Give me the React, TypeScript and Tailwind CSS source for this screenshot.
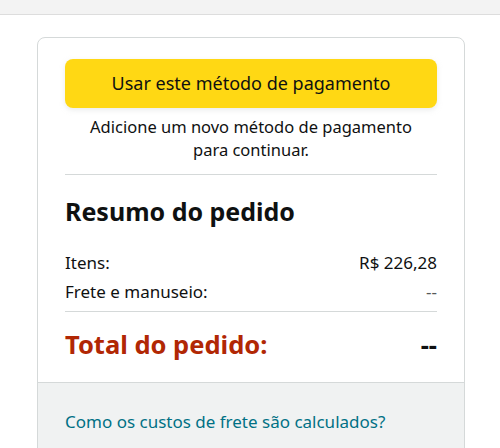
export default function App() {
  return (
    <div className="min-h-[448px] bg-white font-['Noto_Sans',sans-serif] text-[#0f1111]">
      {/* barra superior */}
      <div className="h-[15px] bg-[#f3f3f3] border-b border-[#dddddd]" />

      <div className="pl-[37px] pt-[22px]">
        <div className="w-[428px] rounded-t-lg border border-[#d5d9d9] overflow-hidden">
          <div className="px-[27px] pt-[21px]">
            <button className="w-full h-[49px] rounded-lg bg-[#ffd814] shadow-[0_2px_5px_rgba(213,217,217,0.5)] text-[18px] text-[#0f1111]">
              Usar este método de pagamento
            </button>
            <p className="mt-[7px] text-center text-[16.5px] leading-[23px] px-3">
              Adicione um novo método de pagamento para continuar.
            </p>

            <div className="mt-[13px] border-t border-[#d5d9d9]" />

            <h2 className="mt-[20px] text-[25px] font-bold leading-[32px]">Resumo do pedido</h2>

            <div className="mt-[21px] text-[17px] leading-[29px]">
              <div className="flex justify-between">
                <span>Itens:</span>
                <span>R$ 226,28</span>
              </div>
              <div className="flex justify-between">
                <span>Frete e manuseio:</span>
                <span className="text-[#565959]">--</span>
              </div>
            </div>

            <div className="mt-[5px] border-t border-[#d5d9d9]" />

            <div className="flex justify-between items-center h-[70px] pb-[6px] text-[25.5px] font-bold">
              <span className="text-[#b12704]">Total do pedido:</span>
              <span>--</span>
            </div>
          </div>

          <div className="bg-[#f0f2f2] border-t border-[#d5d9d9] px-[27px] pt-[27px] pb-[20px]">
            <a className="text-[17px] leading-[22px] text-[#007185]">Como os custos de frete são calculados?</a>
          </div>
        </div>
      </div>
    </div>
  );
}
